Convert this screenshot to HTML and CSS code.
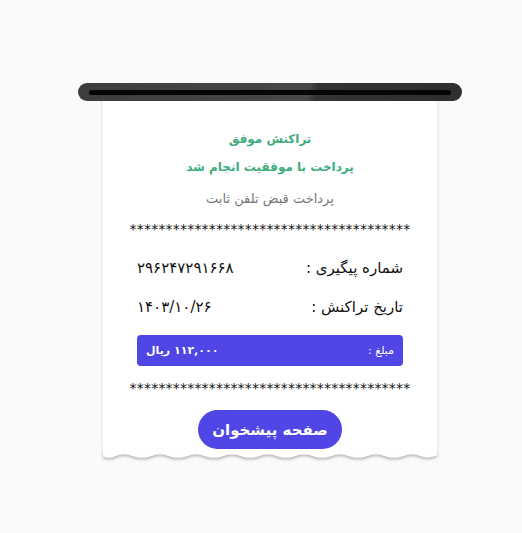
FILE: index.html
```html
<!DOCTYPE html>
<html lang="fa">
<head>
<meta charset="utf-8">
<link rel="stylesheet" href="styles.css">
</head>
<body>
<div class="stage">
  <div class="printer">
    <div class="slot"></div>
  </div>
  <div class="paper">
    <div class="receipt" dir="rtl">
      <div class="status">تراکنش موفق</div>
      <div class="status second">پرداخت با موفقیت انجام شد</div>
      <div class="title">پرداخت قبض تلفن ثابت</div>
      <div class="stars" dir="ltr">***************************************</div>
      <div class="row">
        <span class="label">شماره پیگیری :</span>
        <span class="value">۲۹۶۲۴۷۲۹۱۶۶۸</span>
      </div>
      <div class="row">
        <span class="label">تاریخ تراکنش :</span>
        <span class="value">۱۴۰۳/۱۰/۲۶</span>
      </div>
      <div class="amount">
        <span class="amount-label">مبلغ :</span>
        <span class="amount-value">۱۱۲,۰۰۰ ریال</span>
      </div>
      <div class="stars" dir="ltr">***************************************</div>
      <div class="actions">
        <button class="home-btn">صفحه پیشخوان</button>
      </div>
    </div>
    <svg class="tear" width="334" height="14" viewBox="0 0 334 14" preserveAspectRatio="none">
      <defs>
        <filter id="sh" x="-5%" y="-50%" width="110%" height="250%">
          <feDropShadow dx="0" dy="2" stdDeviation="1.6" flood-color="#000" flood-opacity="0.28"/>
        </filter>
      </defs>
      <path filter="url(#sh)" fill="#fff" d="M0 0 H334 V6 Q326 10 318 7 Q309 3 300 7 Q291 10 282 7 Q273 3 264 7 Q255 10 246 7 Q237 3 228 7 Q219 10 210 7 Q201 3 192 7 Q183 10 174 7 Q165 3 156 7 Q147 10 138 7 Q129 3 120 7 Q111 10 102 7 Q93 3 84 7 Q75 10 66 7 Q57 3 48 7 Q39 10 30 7 Q21 3 12 7 Q6 10 0 7 Z"/>
    </svg>
  </div>
</div>
</body>
</html>
```
FILE: styles.css
```css
html, body {
  margin: 0;
  padding: 0;
  background: #fafafa;
}
body {
  font-family: "DejaVu Sans", "Noto Sans", sans-serif;
}
.stage {
  width: 384px;
  margin-left: 78px;
  padding-top: 83px;
  display: flex;
  flex-direction: column;
  align-items: center;
}
.printer {
  width: 384px;
  height: 18px;
  border-radius: 9px;
  background: linear-gradient(100deg, #3d3d3d 0%, #474747 60%, #333 62%, #2e2e2e 100%);
  display: flex;
  align-items: flex-start;
  justify-content: center;
  padding-top: 7px;
  box-sizing: border-box;
  position: relative;
  z-index: 2;
}
.slot {
  width: 362px;
  height: 5px;
  background: #050505;
  border-radius: 3px;
}
.paper {
  width: 334px;
  margin-top: -8px;
  display: flex;
  flex-direction: column;
  position: relative;
  z-index: 1;
}
.receipt {
  background: #fff;
  box-shadow: -2px 0 3px rgba(0,0,0,0.06), 2px 0 3px rgba(0,0,0,0.06);
  padding: 37px 34px 1px 34px;
  display: flex;
  flex-direction: column;
  align-items: stretch;
}
.tear {
  display: block;
  margin-top: -1px;
  overflow: visible;
}
.status {
  text-align: center;
  color: #3dad7c;
  font-weight: bold;
  font-size: 12px;
  line-height: 18px;
}
.status.second {
  margin-top: 10px;
}
.title {
  text-align: center;
  color: #777;
  font-size: 13px;
  line-height: 18px;
  margin-top: 14px;
}
.stars {
  text-align: center;
  font-size: 14px;
  line-height: 16px;
  color: #111;
  margin: 13px -12px 0 -12px;
  letter-spacing: 0.2px;
  white-space: nowrap;
}
.row {
  display: flex;
  justify-content: space-between;
  align-items: center;
  margin-top: 20px;
  font-size: 15px;
  line-height: 22px;
  color: #111;
}
.row + .row {
  margin-top: 17px;
}
.amount {
  margin-top: 17px;
  background: #4f46e5;
  border-radius: 4px;
  height: 31px;
  display: flex;
  justify-content: space-between;
  align-items: center;
  padding: 0 9px;
  color: #fff;
  font-size: 11px;
}
.amount-value {
  font-weight: bold;
}
.amount + .stars {
  margin-top: 14px;
}
.actions {
  display: flex;
  justify-content: center;
  margin-top: 14px;
}
.home-btn {
  width: 144px;
  height: 39px;
  border: none;
  border-radius: 20px;
  background: #4f46e5;
  color: #fff;
  font-family: inherit;
  font-weight: bold;
  font-size: 15px;
  cursor: pointer;
}
```
